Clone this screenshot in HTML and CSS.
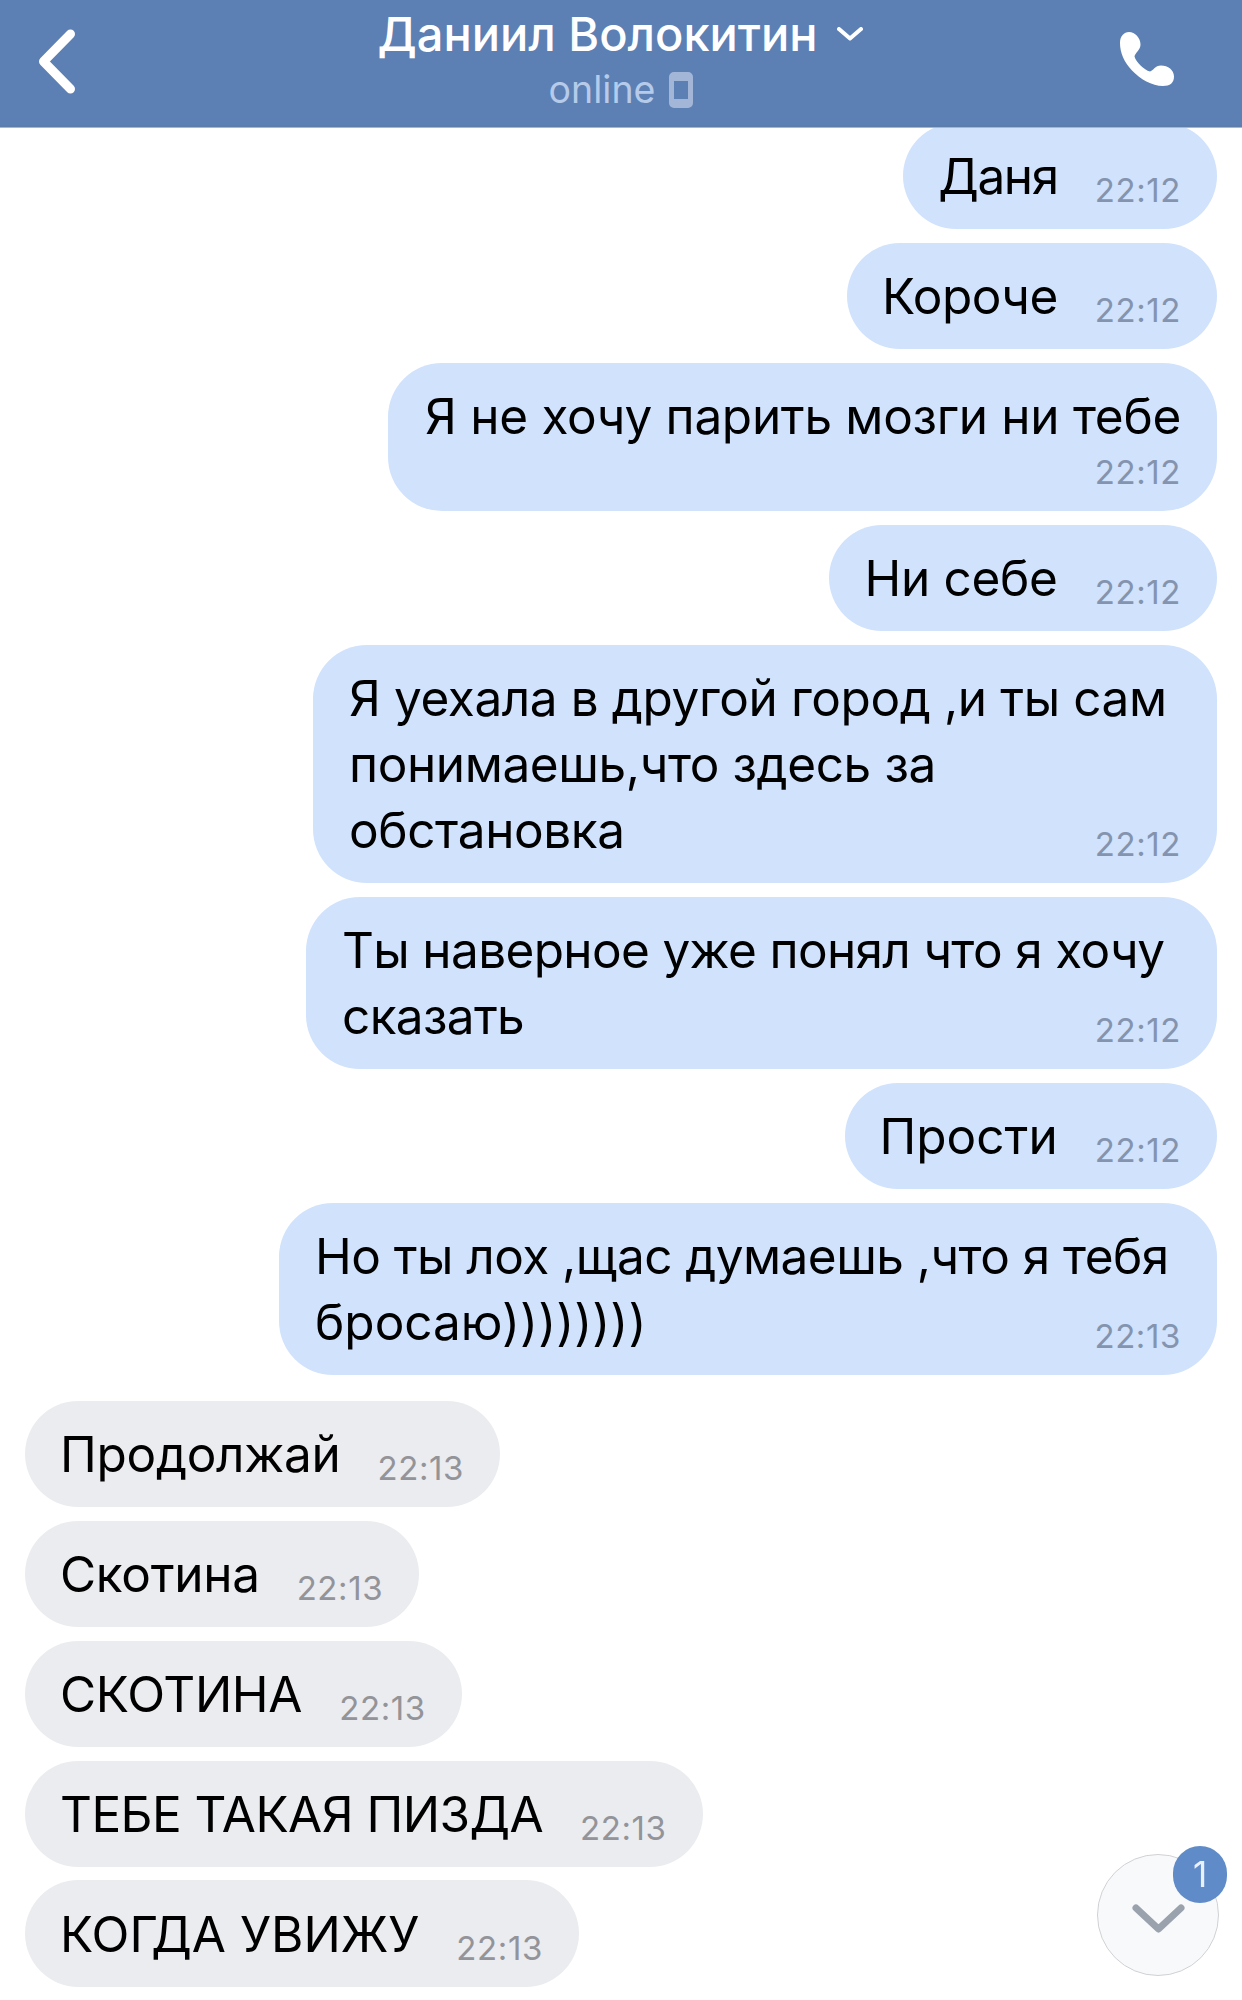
FILE: index.html
```html
<!DOCTYPE html>
<html lang="ru">

<head>
    <meta charset="UTF-8">
    <meta name="viewport" content="width=device-width, initial-scale=1.0">
    <title>Даниил Волокитин</title>
    <link rel="stylesheet" href="styles.css">
</head>

<body>

    <header class="header">
        <svg class="back" width="46" height="70" viewBox="0 0 46 70" fill="none">
            <path d="M37.500 8L10.500 35.500L37.500 63" stroke="#fff" stroke-width="9" stroke-linecap="round" stroke-linejoin="round" />
        </svg>

        <div class="peer">
            <div class="peer-name">
                <span>Даниил Волокитин</span>
                <svg width="26" height="14" viewBox="0 0 26 14" fill="none">
                    <path d="M2 2L13 11.500L24 2" stroke="#fff" stroke-width="4" stroke-linecap="round" stroke-linejoin="round" />
                </svg>
            </div>
            <div class="peer-status">
                <span>online</span>
                <svg width="24" height="36" viewBox="0 0 24 36">
                    <path fill-rule="evenodd" fill="#a3b6d8" d="M5 0H19A5 5 0 0 1 24 5V31A5 5 0 0 1 19 36H5A5 5 0 0 1 0 31V5A5 5 0 0 1 5 0ZM5 9V27H19V9Z" />
                </svg>
            </div>
        </div>

        <svg class="call" width="54" height="54" viewBox="0 0 54 54">
            <path fill="#fff" d="M0 11C0 4 4 0 9 0C15 0 20.500 6 20.500 12.500C20.500 18 15 21 14.500 24.500C16 30 24 38 30 39.500C33 39 35 33.500 41 33.500C48 33.500 54 38 54 44.500C54 51 50 54 43 54C32 54 20 47 12 38.500C4 30 0 21 0 11Z" />
        </svg>
    </header>

    <main class="messages">
        <!-- исходящие -->
        <div class="group out">
            <div class="msg narrow"><span class="text">Даня</span><span class="time">22:12</span></div>
            <div class="msg tight"><span class="text">Короче</span><span class="time">22:12</span></div>
            <div class="msg below"><span class="text">Я не хочу парить мозги ни тебе</span><span class="time">22:12</span></div>
            <div class="msg"><span class="text">Ни себе</span><span class="time">22:12</span></div>
            <div class="msg multi city"><span class="text">Я уехала в другой город ,и ты сам<br>понимаешь,что здесь за<br>обстановка</span><span class="time">22:12</span></div>
            <div class="msg multi guess"><span class="text">Ты наверное уже понял что я хочу<br>сказать</span><span class="time">22:12</span></div>
            <div class="msg loose"><span class="text">Прости</span><span class="time">22:12</span></div>
            <div class="msg multi leave"><span class="text">Но ты лох ,щас думаешь ,что я тебя<br><span class="smile">бросаю))))))))</span></span><span class="time">22:13</span></div>
        </div>

        <!-- входящие -->
        <div class="group in">
            <div class="msg"><span class="text">Продолжай</span><span class="time">22:13</span></div>
            <div class="msg"><span class="text">Скотина</span><span class="time">22:13</span></div>
            <div class="msg"><span class="text">СКОТИНА</span><span class="time">22:13</span></div>
            <div class="msg tight"><span class="text">ТЕБЕ ТАКАЯ ПИЗДА</span><span class="time">22:13</span></div>
            <div class="msg loose"><span class="text">КОГДА УВИЖУ</span><span class="time">22:13</span></div>
        </div>
    </main>

    <div class="scroll-down">
        <svg width="54" height="30" viewBox="0 0 54 30" fill="none">
            <path d="M4 4L26.500 25L49 4" stroke="#99a2ad" stroke-width="7" stroke-linecap="round" stroke-linejoin="round" />
        </svg>
        <span class="badge">1</span>
    </div>

</body>

</html>
```
FILE: styles.css
```css
* {
    box-sizing: border-box;
}

body {
    margin: 0;
    height: 2000px;
    overflow: hidden;
    background: #fff;
    color: #000;
    font-family: "Inter", "Noto Sans", sans-serif;
}

.header {
    position: relative;
    z-index: 1;
    display: flex;
    justify-content: space-between;
    align-items: flex-start;
    height: 128px;
    padding: 0 68px 0 33px;
    background: #5c80b4;
    border-bottom: 1px solid #a9b5cc;
    box-shadow: inset 0 -2px 0 #5f7daa;
}

.back {
    margin-top: 26px;
}

.call {
    margin-top: 32px;
}

.peer {
    display: flex;
    flex-direction: column;
    align-items: center;
    margin-left: 41px;
    color: #fff;
}

.peer-name {
    display: flex;
    align-items: center;
    gap: 19px;
    height: 67px;
    font-size: 47px;
    font-weight: 500;
    line-height: 67px;
}

.peer-status {
    display: flex;
    align-items: center;
    gap: 14px;
    height: 46px;
    padding-left: 2px;
    color: #b6cbea;
    font-size: 37.5px;
    line-height: 46px;
}

.messages {
    margin-top: -5.33px;
    padding: 0 25px;
}

.group {
    display: flex;
    flex-direction: column;
    gap: 13.33px;
}

.out {
    align-items: flex-end;
}

.in {
    align-items: flex-start;
    margin-top: 25.33px;
}

.msg {
    display: flex;
    align-items: flex-end;
    gap: 37px;
    padding: 20.67px 36px 20px 35px;
    border-radius: 54px;
    background: #d0e2fc;
    font-size: 49.5px;
    line-height: 66px;
    letter-spacing: -0.3px;
    white-space: nowrap;
}

.in .msg {
    background: #ebecf0;
}

.time {
    margin-bottom: -0.67px;
    color: #8494ae;
    font-size: 33px;
    line-height: 40px;
    letter-spacing: 0.6px;
}

.in .time {
    color: #939499;
}

/* плотность букв */
.narrow {
    letter-spacing: -1.4px;
}

.tight {
    letter-spacing: -0.55px;
}

.loose,
.smile {
    letter-spacing: 0;
}

/* время под текстом */
.below {
    flex-direction: column;
    gap: 2.67px;
    width: 829px;
    padding-left: 37px;
}

/* время в углу последней строки */
.multi {
    display: grid;
}

.multi .text,
.multi .time {
    grid-area: 1 / 1;
}

.multi .time {
    align-self: end;
    justify-self: end;
}

.city {
    width: 904px;
    padding-left: 36px;
    letter-spacing: -0.4px;
}

.guess {
    width: 911px;
    padding-left: 36px;
    letter-spacing: -0.65px;
}

.leave {
    width: 938px;
    padding-left: 36px;
    letter-spacing: -0.55px;
}

/* кнопка прокрутки вниз */
.scroll-down {
    position: fixed;
    top: 1854px;
    left: 1097px;
    display: flex;
    justify-content: center;
    align-items: center;
    width: 122px;
    height: 122px;
    padding: 8px 0 0 2px;
    border: 1px solid #d0d1d4;
    border-radius: 50%;
    background: #f8f9fb;
}

.badge {
    position: absolute;
    top: -9px;
    right: -9px;
    width: 54px;
    height: 57px;
    border-radius: 28px;
    background: #5f8bc9;
    color: #e8f1fd;
    font-size: 35px;
    line-height: 57px;
    text-align: center;
}
```
